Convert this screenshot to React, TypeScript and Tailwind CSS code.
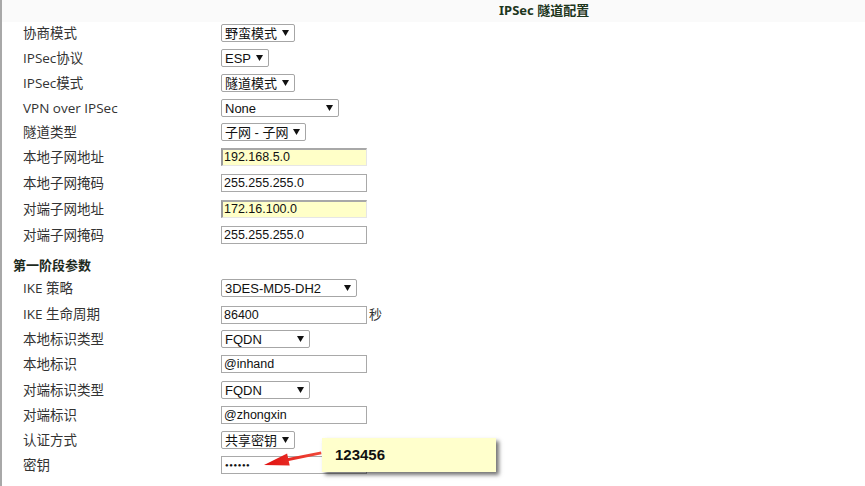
import React from "react";

const labelFont = { fontFamily: '"Open Sans", "Noto Sans CJK SC", sans-serif' };
const titleFont = { fontFamily: '"Noto Sans", "Noto Sans CJK SC", sans-serif' };
const ctrlFont = { fontFamily: '"Liberation Sans", Arial, "Noto Sans CJK SC", sans-serif' };

function Arrow() {
  return (
    <svg width="7" height="6" viewBox="0 0 7 6" className="shrink-0">
      <path d="M0 0H7L3.5 6Z" fill="#111" />
    </svg>
  );
}

function Select({ text, w }: { text: string; w: string }) {
  return (
    <div
      className={`flex items-center justify-between h-[18px] border border-[#a6a6a6] rounded-[2px] bg-white pl-[3px] pr-[5px] text-[13px] text-[#111] leading-none ${w}`}
      style={ctrlFont}
    >
      <span className="whitespace-nowrap">{text}</span>
      <Arrow />
    </div>
  );
}

function Input({ text, yellow, pw }: { text: string; yellow?: boolean; pw?: boolean }) {
  const cls = yellow
    ? "bg-[#ffffc8] border-t-2 border-l-2 border-b border-r border-t-[#a8a8a8] border-l-[#9a9a9a] border-b-[#e6e6e6] border-r-[#e6e6e6] pl-[1px]"
    : "bg-white border border-[#a9a9a9] pl-[2px]";
  return (
    <div
      className={`flex items-center w-[146px] h-[18px] text-[12.5px] text-[#111] leading-none ${cls}`}
      style={ctrlFont}
    >
      {pw ? <span className="text-[6px] tracking-[0.6px] pl-[1px]">●●●●●●</span> : <span>{text}</span>}
    </div>
  );
}

type Row = { label: string; h: string; ctrl: React.ReactNode };

function FormRow({ label, h, ctrl }: Row) {
  return (
    <div className={`flex items-start ${h}`}>
      <div
        className="w-[219px] pl-[21px] pt-[2px] h-[20px] flex items-center text-[13.5px] text-[#333] whitespace-nowrap"
        style={labelFont}
      >
        {label}
      </div>
      <div className="pt-[2px] flex items-center">{ctrl}</div>
    </div>
  );
}

export default function App() {
  const rows1: Row[] = [
    { label: "协商模式", h: "h-[25px]", ctrl: <Select text="野蛮模式" w="w-[74px]" /> },
    { label: "IPSec协议", h: "h-[25px]", ctrl: <Select text="ESP" w="w-[48px]" /> },
    { label: "IPSec模式", h: "h-[25px]", ctrl: <Select text="隧道模式" w="w-[74px]" /> },
    { label: "VPN over IPSec", h: "h-[24px]", ctrl: <Select text="None" w="w-[118px]" /> },
    { label: "隧道类型", h: "h-[25px]", ctrl: <Select text="子网 - 子网" w="w-[85px]" /> },
    { label: "本地子网地址", h: "h-[26px]", ctrl: <Input text="192.168.5.0" yellow /> },
    { label: "本地子网掩码", h: "h-[26px]", ctrl: <Input text="255.255.255.0" /> },
    { label: "对端子网地址", h: "h-[26px]", ctrl: <Input text="172.16.100.0" yellow /> },
    { label: "对端子网掩码", h: "h-[26px]", ctrl: <Input text="255.255.255.0" /> },
  ];
  const rows2: Row[] = [
    { label: "IKE 策略", h: "h-[26px]", ctrl: <Select text="3DES-MD5-DH2" w="w-[136px]" /> },
    {
      label: "IKE 生命周期",
      h: "h-[25px]",
      ctrl: (
        <div className="flex items-center">
          <Input text="86400" />
          <span className="ml-[2px] text-[13px] text-[#333]" style={labelFont}>秒</span>
        </div>
      ),
    },
    { label: "本地标识类型", h: "h-[25px]", ctrl: <Select text="FQDN" w="w-[89px]" /> },
    { label: "本地标识", h: "h-[26px]", ctrl: <Input text="@inhand" /> },
    { label: "对端标识类型", h: "h-[25px]", ctrl: <Select text="FQDN" w="w-[89px]" /> },
    { label: "对端标识", h: "h-[25px]", ctrl: <Input text="@zhongxin" /> },
    { label: "认证方式", h: "h-[25px]", ctrl: <Select text="共享密钥" w="w-[74px]" /> },
    { label: "密钥", h: "h-[32px]", ctrl: <Input text="" pw /> },
  ];

  return (
    <div className="relative w-[865px] h-[486px] overflow-hidden bg-white border-l-2 border-[#a8a8a8]">
      <div
        className="h-[22px] bg-[#fafafa] pl-[497px] flex items-center text-[13px] font-bold text-[#1d361d]"
        style={titleFont}
      >
        IPSec 隧道配置
      </div>
      {rows1.map((r, i) => (
        <FormRow key={i} {...r} />
      ))}
      <div
        className="h-[27px] pl-[11px] pt-[6px] text-[13px] font-bold text-[#1d2a1d] leading-[18px]"
        style={titleFont}
      >
        第一阶段参数
      </div>
      {rows2.map((r, i) => (
        <FormRow key={i} {...r} />
      ))}

      {/* annotation arrow */}
      <svg className="absolute left-[253px] top-[445px]" width="72" height="30" viewBox="0 0 72 30">
        <defs>
          <linearGradient id="ag" x1="0" y1="0" x2="1" y2="0">
            <stop offset="0" stopColor="#e01010" />
            <stop offset="1" stopColor="#f04a3a" />
          </linearGradient>
        </defs>
        <path
          d="M9 20 L32.1 8.6 L33.1 13 L66 6.6 L66.5 9.2 L33.7 16 L34.7 20.4 Z"
          fill="url(#ag)"
        />
      </svg>

      {/* annotation box */}
      <div className="absolute left-[320px] top-[438px] w-[174px] h-[34px] bg-[#ffffcc] shadow-[3px_3px_4px_rgba(0,0,0,0.55)] flex items-center pl-[13px]">
        <span className="text-[15px] font-bold text-[#111]" style={ctrlFont}>
          123456
        </span>
      </div>
    </div>
  );
}
